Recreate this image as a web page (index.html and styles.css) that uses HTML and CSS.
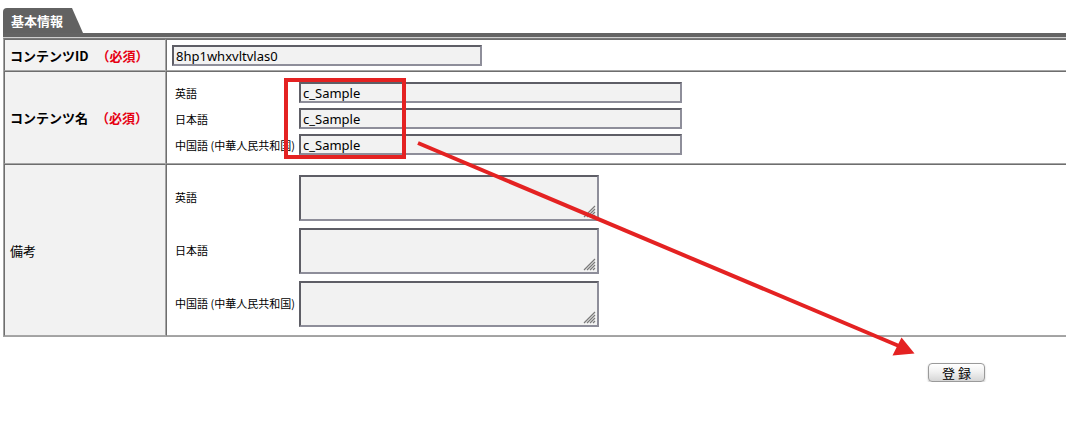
FILE: index.html
```html
<!DOCTYPE html>
<html lang="ja">
<head>
<meta charset="utf-8">
<title>基本情報</title>
<link rel="stylesheet" href="styles.css">
</head>
<body>
<div class="page">
  <div class="tab-row"><div class="tab">基本情報</div></div>
  <div class="bar"></div>
  <table class="form">
    <tr class="r1">
      <th>コンテンツID <span class="req">（必須）</span></th>
      <td><input class="txt id" type="text" value="8hp1whxvltvlas0"></td>
    </tr>
    <tr class="r2">
      <th>コンテンツ名 <span class="req">（必須）</span></th>
      <td>
        <div class="fields">
          <span class="lbl">英語</span><input class="txt name" type="text" value="c_Sample">
          <span class="lbl">日本語</span><input class="txt name" type="text" value="c_Sample">
          <span class="lbl">中国語 (中華人民共和国)</span><input class="txt name" type="text" value="c_Sample">
        </div>
      </td>
    </tr>
    <tr class="r3">
      <th class="plain">備考</th>
      <td>
        <div class="fields areas">
          <span class="lbl">英語</span><span class="ta-wrap"><textarea class="ta"></textarea><svg class="grip" width="13" height="13" viewBox="0 0 13 13"><path d="M12 1L1 12M12 4L4 12M12 7L7 12M12 10L10 12" stroke="#7a7a7a" stroke-width="1.2"/></svg></span>
          <span class="lbl">日本語</span><span class="ta-wrap"><textarea class="ta"></textarea><svg class="grip" width="13" height="13" viewBox="0 0 13 13"><path d="M12 1L1 12M12 4L4 12M12 7L7 12M12 10L10 12" stroke="#7a7a7a" stroke-width="1.2"/></svg></span>
          <span class="lbl">中国語 (中華人民共和国)</span><span class="ta-wrap"><textarea class="ta"></textarea><svg class="grip" width="13" height="13" viewBox="0 0 13 13"><path d="M12 1L1 12M12 4L4 12M12 7L7 12M12 10L10 12" stroke="#7a7a7a" stroke-width="1.2"/></svg></span>
        </div>
      </td>
    </tr>
  </table>
  <div class="actions"><button class="btn" type="button">登 録</button></div>
</div>
<svg class="annot" width="1066" height="429" viewBox="0 0 1066 429">
  <rect x="286" y="80" width="118" height="77" fill="none" stroke="#e42222" stroke-width="4"/>
  <line x1="418" y1="143" x2="899" y2="346" stroke="#e42222" stroke-width="4"/>
  <polygon points="901.5,337.5 892.5,355.5 914.5,353.5" fill="#e42222"/>
</svg>
</body>
</html>
```

FILE: styles.css
```css
html, body {
  margin: 0;
  padding: 0;
  background: #fff;
}
body {
  position: relative;
  width: 1066px;
  height: 429px;
  overflow: hidden;
  font-family: "Noto Sans", "Noto Sans CJK JP", sans-serif;
  color: #000;
}
.page {
  padding: 8px 0 0 3px;
  overflow: hidden;
}
.tab-row {
  display: flex;
}
.tab {
  height: 25px;
  width: 80px;
  box-sizing: border-box;
  padding: 4px 0 0 8px;
  background: #626262;
  color: #fff;
  font-family: "Noto Sans CJK JP", sans-serif;
  font-weight: bold;
  font-size: 13px;
  line-height: 17px;
  border-top-left-radius: 4px;
  clip-path: polygon(0 0, 69px 0, 80px 25px, 0 25px);
}
.bar {
  height: 4px;
  width: 1080px;
  background: #646464;
  border-bottom: 1px solid #cfcfcf;
}
.form {
  width: 1080px;
  border-collapse: separate;
  border-spacing: 0;
  border: 1px solid #a2a2a2;
  border-top-color: #7a7a7a;
  font-family: "Noto Sans CJK JP", sans-serif;
}
.form th, .form td {
  border: 1px solid;
  border-color: #6e6e6e #a6a6a6 #a6a6a6 #6e6e6e;
  vertical-align: middle;
}
.form th {
  width: 150px;
  padding: 0 5px;
  background: #f2f2f2;
  text-align: left;
  font-size: 13px;
  font-weight: bold;
  white-space: nowrap;
}
.form th.plain {
  font-weight: normal;
}
.req {
  color: #e60012;
  margin-left: 5px;
}
.r1 td {
  padding: 5px 5px 4px;
}
.r2 td {
  padding: 10px 8px 8px;
}
.r3 td {
  padding: 10px 8px 8px;
}
.fields {
  display: grid;
  grid-template-columns: 124px auto;
  justify-content: start;
  align-items: center;
  row-gap: 5px;
}
.fields.areas {
  row-gap: 7px;
}
.lbl {
  font-size: 11px;
  line-height: 14px;
  white-space: nowrap;
}
.areas .lbl {
  margin-top: -2px;
}
.txt {
  display: block;
  box-sizing: border-box;
  height: 21px;
  margin: 0;
  padding: 0 2px;
  border: 2px solid;
  border-color: #5e5e66 #8e8e9a #8e8e9a #5e5e66;
  background: #f2f2f2;
  font-family: "Noto Sans", sans-serif;
  font-size: 13px;
  color: #000;
  outline: none;
}
.txt.id {
  width: 310px;
}
.txt.name {
  width: 383px;
}
.ta-wrap {
  position: relative;
  display: block;
  width: 300px;
  height: 46px;
}
.ta {
  display: block;
  box-sizing: border-box;
  width: 300px;
  height: 46px;
  margin: 0;
  padding: 2px;
  border: 2px solid;
  border-color: #5e5e66 #8e8e9a #8e8e9a #5e5e66;
  background: #f2f2f2;
  resize: none;
  outline: none;
}
.grip {
  position: absolute;
  right: 3px;
  bottom: 3px;
}
.actions {
  padding: 26px 0 0 925px;
}
.btn {
  display: block;
  box-sizing: border-box;
  width: 57px;
  height: 19px;
  margin: 0;
  padding: 0;
  border: 1px solid #9a9a9a;
  border-radius: 4px;
  background: linear-gradient(#ffffff, #f1f1f1 45%, #d6d6d6);
  box-shadow: 0 1px 2px rgba(0,0,0,0.25);
  font-family: "Noto Sans CJK JP", sans-serif;
  font-size: 13px;
  line-height: 15px;
  color: #000;
}
.annot {
  position: absolute;
  left: 0;
  top: 0;
  pointer-events: none;
}
```
